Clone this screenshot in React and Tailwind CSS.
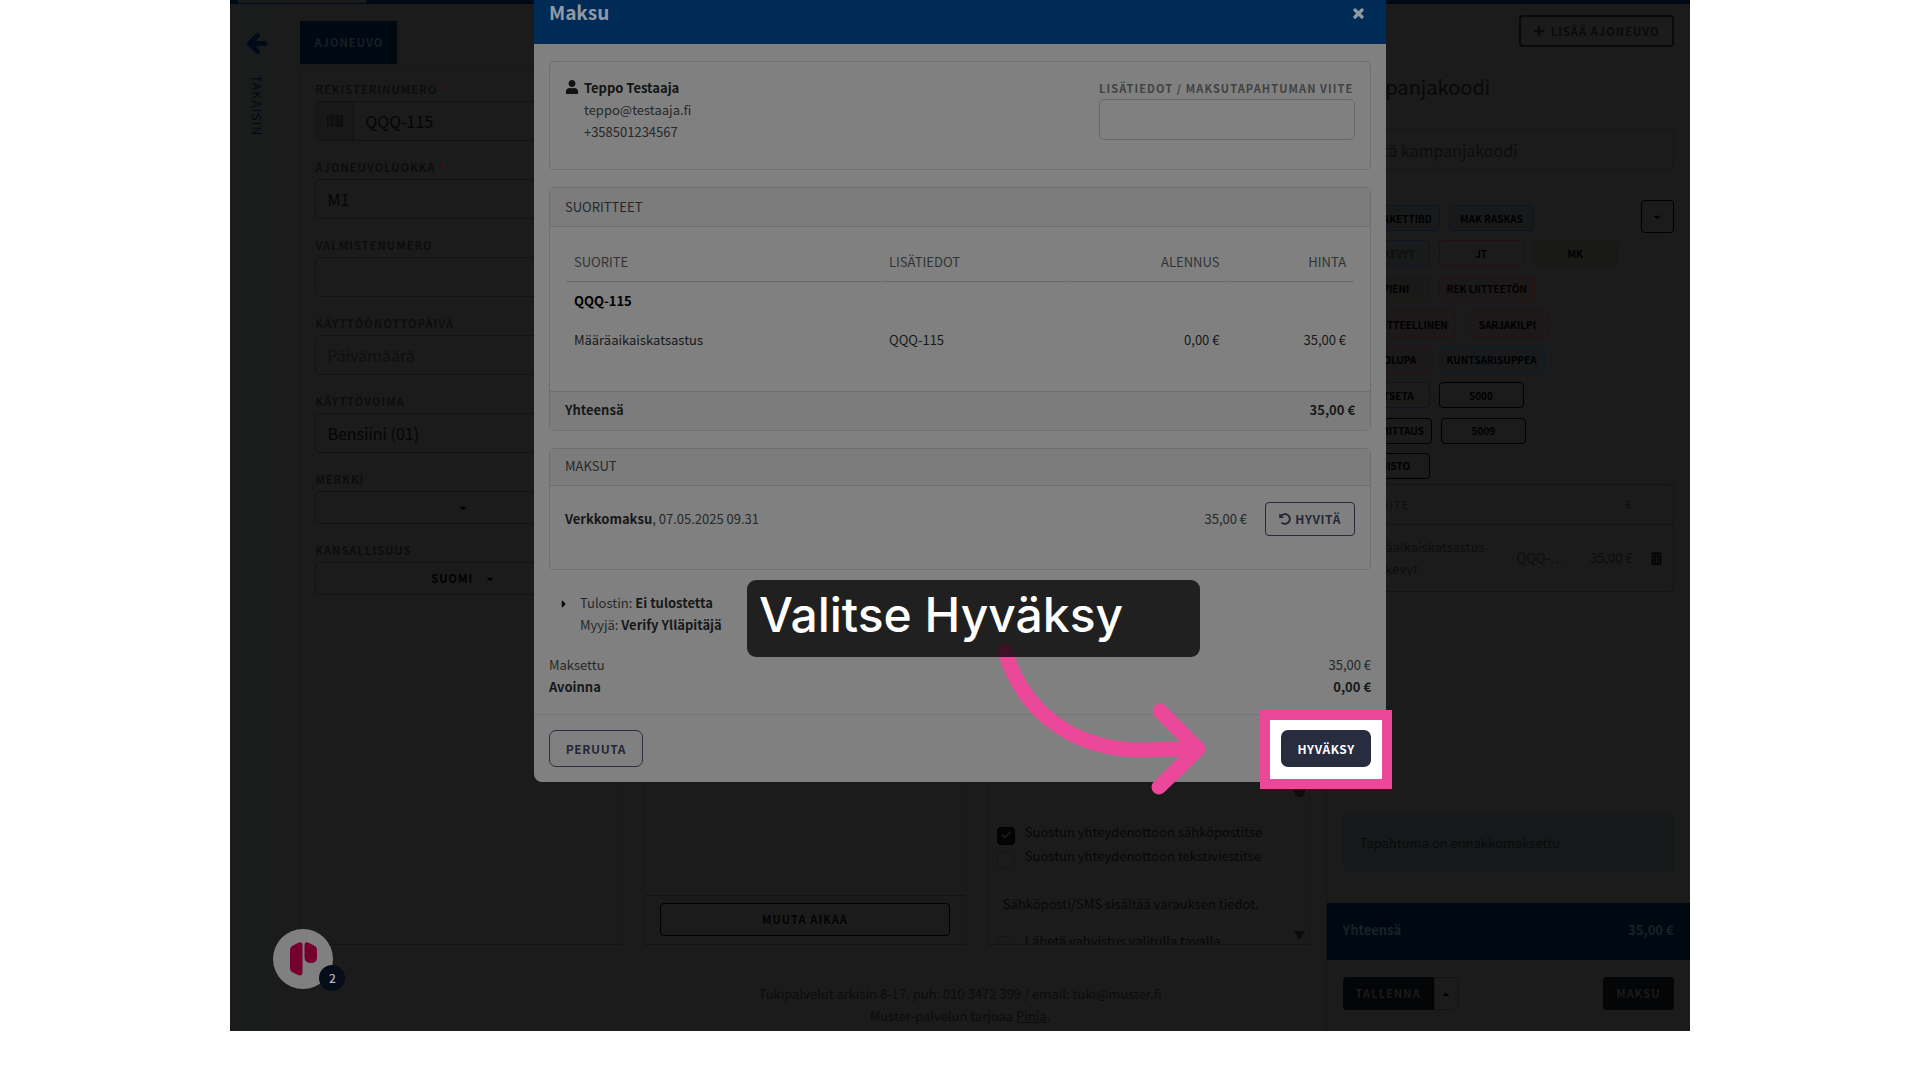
import React from "react";
import { FaPlus, FaUser, FaUndoAlt, FaTrashAlt, FaBarcode, FaCaretDown, FaCaretUp, FaCaretRight, FaCheck } from "react-icons/fa";

const label = "block text-[11px] leading-4 font-bold tracking-widest text-[#0d0d0d]";

function Field({ id, title, required, value, placeholder, icon }) {
  return (
    <div>
      <label htmlFor={id} className={label}>
        {title}
        {required && <span className="text-[#4a0808]"> *</span>}
      </label>
      <div className="mt-1 flex h-10 overflow-hidden rounded-[5px] border border-[#121212]">
        {icon && <span className="flex w-[38px] shrink-0 items-center justify-center border-r border-[#121212] bg-[#181818] text-[#0a0a0a]">{icon}</span>}
        <input id={id} defaultValue={value} placeholder={placeholder} className="w-full min-w-0 bg-transparent px-[11px] text-base text-[#050505] placeholder:text-[#0f0f0f]" />
      </div>
    </div>
  );
}

function PickField({ id, title, value }) {
  return (
    <div>
      <label htmlFor={id} className={label}>{title}</label>
      <button id={id} type="button" className="mt-1 flex h-[33px] w-full items-center justify-center gap-3 rounded-[5px] border border-[#121212] pl-1 text-[11px] font-bold tracking-widest text-black">
        {value && <span>{value}</span>}
        <FaCaretDown className="size-[10px]" />
      </button>
    </div>
  );
}

const tagRows = [
  [["MAK PAKETTIBD", "border-[#06152a] bg-[#18191b] text-black"], ["MAK RASKAS", "border-[#06152a] bg-[#18191b] text-black"]],
  [["MAK KEVYT", "border-[#0f1520] bg-[#191a1a] text-[#0d0e0e]"], ["JT", "border-[#230f14] text-black"], ["MK", "border-[#151b13] bg-[#191a18] text-black"]],
  [["MP PIENI", "border-[#141b12] bg-[#191a18] text-black"], ["REK LIITTEETÖN", "border-[#29100d] bg-[#1b1919] text-black"]],
  [["REK LIITTEELLINEN", "border-[#29100d] bg-[#1b1919] text-black"], ["SARJAKILPI", "border-[#29100d] bg-[#1b1919] text-black"]],
  [["SIIRTOLUPA", "border-[#29100d] bg-[#1b1919] text-black"], ["KUNTSARISUPPEA", "border-[#081e27] bg-[#181a1b] text-black"]],
  [["A-KATSETA", "border-[#14121f] text-black"], ["5000", "border-black text-black"]],
  [["MELUMITTAUS", "border-black text-black"], ["5009", "border-black text-black"]],
  [["REKIISTO", "border-black text-black"]],
];

const consents = [
  ["Suostun yhteydenottoon sähköpostitse", true],
  ["Suostun yhteydenottoon tekstiviestitse", false],
];

function Tick({ id, text, checked }) {
  return (
    <div className="flex h-6 items-start gap-[10px]">
      <span className="relative mt-[2px] size-[18px] shrink-0">
        <input id={id} type="checkbox" defaultChecked={checked} className="peer size-[18px] appearance-none rounded-[4px] border border-[#161616] checked:border-black checked:bg-[#030405]" />
        {checked && <FaCheck className="pointer-events-none absolute left-1 top-1 size-[10px] text-[#1b1b1b]" />}
      </span>
      <label htmlFor={id} className="text-[13px] leading-4 whitespace-nowrap text-[#070707]">{text}</label>
    </div>
  );
}

function Workspace() {
  return (
    <main className="flex min-w-0 flex-1 flex-col pt-[17px] pr-4 pl-4">
      <div>
        <button type="button" className="h-[43px] bg-[#000812] px-[14px] text-[11px] font-bold tracking-widest text-[#191f25]">AJONEUVO</button>
      </div>
      <div className="grid min-h-0 flex-1 grid-cols-3 gap-[22px]">
        <section className="border border-[#181818] border-b-[#131313] px-[14px] pt-4">
          <form className="flex flex-col gap-[18px]">
            <Field id="reg" title="REKISTERINUMERO" required value="QQQ-115" icon={<FaBarcode className="size-4" />} />
            <Field id="cls" title="AJONEUVOLUOKKA" required value="M1" />
            <Field id="vin" title="VALMISTENUMERO" />
            <Field id="date" title="KÄYTTÖÖNOTTOPÄIVÄ" placeholder="Päivämäärä" />
            <Field id="fuel" title="KÄYTTÖVOIMA" value="Bensiini (01)" />
            <PickField id="make" title="MERKKI" />
            <PickField id="nat" title="KANSALLISUUS" value="SUOMI" />
          </form>
        </section>
        <section className="flex flex-col justify-end border border-[#181818] border-b-[#131313]">
          <div className="border-t border-[#131313] px-[15px] pt-[7px] pb-2">
            <button type="button" className="h-[33px] w-full rounded-[4px] border border-black text-[11px] font-bold tracking-widest text-[#020304]">MUUTA AIKAA</button>
          </div>
        </section>
        <section className="flex flex-col overflow-hidden border border-[#181818] border-b-[#131313]">
          <div className="flex min-h-0 flex-1">
            <div className="flex min-w-0 flex-1 flex-col justify-end overflow-hidden pl-2">
              {consents.map(([text, on], i) => (
                <Tick key={text} id={"consent" + i} text={text} checked={on} />
              ))}
              <p className="mt-[22px] mb-[19px] pl-[6px] text-[13px] leading-5 text-[#070707]">Sähköposti/SMS sisältää varauksen tiedot.</p>
              <div className="h-[11px] overflow-hidden">
                <Tick id="confirm" text="Lähetä vahvistus valitulla tavalla" />
              </div>
            </div>
            <div className="flex w-[18px] flex-col items-center justify-end">
              <span className="mb-[134px] w-[11px] flex-1 rounded-full bg-[#0d0d0d]" />
              <svg viewBox="0 0 11 9" className="mb-1 h-[9px] w-[11px]"><path d="M0 0H11L5.500 9Z" fill="#0b0b0b" /></svg>
            </div>
          </div>
        </section>
      </div>
      <footer className="pt-[38px] pb-1 pl-[310px] text-center text-[13px] leading-[22px] whitespace-nowrap text-[#0b0b0b]">
        <p>Tukipalvelut arkisin 8-17. puh: 010 3472 399 / email: tuki@muster.fi</p>
        <p>Muster-palvelun tarjoaa <a href="#pinja" className="underline">Pinja</a>.</p>
      </footer>
    </main>
  );
}

function Basket() {
  return (
    <aside className="flex w-[364px] shrink-0 flex-col border-l border-[#141414]">
      <div className="flex flex-col px-4 pt-[11px]">
        <button type="button" className="flex h-8 items-center gap-[6px] self-end rounded-[4px] border-2 border-[#0a0a0a] px-3 text-[11px] font-bold tracking-widest text-[#0a0a0a]">
          <FaPlus className="size-3" />LISÄÄ AJONEUVO
        </button>
        <h2 className="mt-6 text-xl leading-8 text-[#080808]">Kampanjakoodi</h2>
        <input aria-label="Kampanjakoodi" placeholder="Syötä kampanjakoodi" className="mt-[26px] h-[41px] rounded-[5px] border border-[#151515] bg-transparent px-3 text-base placeholder:text-[#0d0d0d]" />
        <div className="mt-[30px] flex items-start justify-between">
          <div className="mt-[5px] flex h-[274px] flex-col justify-between pl-[2px]">
            {tagRows.map((row, i) => (
              <div key={i} className="flex gap-[9px]">
                {row.map(([text, tone]) => (
                  <button key={text} type="button" className={"h-[26px] min-w-[85px] rounded-[4px] border px-[7px] text-[10px] font-bold whitespace-nowrap " + tone}>{text}</button>
                ))}
              </div>
            ))}
          </div>
          <button type="button" aria-label="Lisää suoritteita" className="flex size-[33px] shrink-0 items-center justify-center rounded-[4px] border border-black text-black"><FaCaretDown className="size-[10px]" /></button>
        </div>
        <table className="mt-[5px] w-full border-separate border-spacing-0 rounded-[3px] border border-[#141414] text-[13px] text-[#0d0d0d]">
          <thead>
            <tr className="h-10 text-[11px] tracking-widest">
              <th className="border-b border-[#141414] px-3 text-left font-normal">SUORITE</th>
              <th className="border-b border-[#141414]" />
              <th className="border-b border-[#141414] pr-2 text-right font-normal">€</th>
              <th className="w-8 border-b border-[#141414]" />
            </tr>
          </thead>
          <tbody>
            <tr className="h-[66px]">
              <td className="px-3 leading-[22px]">Määräaikaiskatsastus<br />MAK kevyt</td>
              <td className="w-[68px]">QQQ-…</td>
              <td className="w-[56px] pr-2 text-right whitespace-nowrap">35,00 €</td>
              <td><button type="button" aria-label="Poista" className="flex w-full justify-center"><FaTrashAlt className="size-[13px] text-[#050505]" /></button></td>
            </tr>
          </tbody>
        </table>
      </div>
      <div className="mt-auto px-4 pb-8">
        <p className="rounded-[4px] border border-[#131819] bg-[#151919] px-4 py-4 text-[13px] leading-[22px] text-[#070b0c]">Tapahtuma on ennakkomaksettu</p>
      </div>
      <div className="flex h-[57px] items-center justify-between bg-[#000812] px-4 pb-1 text-[13px] font-bold text-[#1b2025]">
        <span>Yhteensä</span><span>35,00 €</span>
      </div>
      <div className="flex justify-between px-4 pt-[17px] pb-[21px] text-[11px] font-bold tracking-widest text-[#1b1b1b]">
        <div className="flex">
          <button type="button" className="h-[33px] rounded-l-[4px] bg-[#040506] px-[13px]">TALLENNA</button>
          <button type="button" aria-label="Lisää toimintoja" className="flex w-[25px] items-center justify-center rounded-r-[4px] border border-[#141414] text-black"><FaCaretUp className="size-[10px]" /></button>
        </div>
        <button type="button" className="h-[33px] rounded-[4px] bg-[#040506] px-[13px]">MAKSU</button>
      </div>
    </aside>
  );
}

function PaymentDialog() {
  return (
    <div role="dialog" aria-label="Maksu" className="relative w-[58.4%] rounded-b-lg bg-[#808080] text-[13px] leading-[22px] text-[#252829]">
      <header className="flex h-11 items-start justify-between bg-[#002b57] px-[15px] text-[#909aa5]">
        <h1 className="text-[19px] leading-6 font-bold">Maksu</h1>
        <button type="button" aria-label="Sulje" className="mt-2 mr-[7px]">
          <svg viewBox="0 0 11 11" className="size-[11px]" fill="none" stroke="currentColor" strokeWidth="3.2" strokeLinecap="round"><path d="M2 2L9 9M9 2L2 9" /></svg>
        </button>
      </header>

      <div className="flex flex-col gap-[17px] px-[15px] pt-[17px]">
        <section className="flex h-[109px] justify-between rounded-[5px] border border-[#6f6f6f] px-[15px] pt-[15px]">
          <div className="flex gap-[5px]">
            <FaUser className="mt-[3px] size-[14px] text-[#101213]" />
            <address className="not-italic">
              <strong className="text-[#121415]">Teppo Testaaja</strong><br />teppo@testaaja.fi<br />+358501234567
            </address>
          </div>
          <div className="w-[256px]">
            <label htmlFor="ref" className="block text-[11px] leading-[22px] font-bold tracking-widest whitespace-nowrap text-[#404243]">LISÄTIEDOT / MAKSUTAPAHTUMAN VIITE</label>
            <input id="ref" className="h-[41px] w-full rounded-[5px] border border-[#696969] bg-transparent px-3" />
          </div>
        </section>

        <section className="rounded-[5px] border border-[#6f6f6f]">
          <h2 className="border-b border-[#6f6f6f] bg-[#7c7c7c] px-[15px] pt-2 pb-2">SUORITTEET</h2>
          <div className="px-[15px] pt-4 pb-8">
            <table className="w-full table-fixed border-separate border-spacing-x-px border-spacing-y-0">
              <colgroup><col className="w-[40%]" /><col className="w-[24%]" /><col className="w-[20%]" /><col className="w-[16%]" /></colgroup>
              <thead>
                <tr className="h-[39px] text-[#303334]">
                  <th className="border-b border-[#696969] px-2 text-left font-normal">SUORITE</th>
                  <th className="border-b border-[#696969] px-2 text-left font-normal">LISÄTIEDOT</th>
                  <th className="border-b border-[#696969] px-2 text-right font-normal">ALENNUS</th>
                  <th className="border-b border-[#696969] px-2 text-right font-normal">HINTA</th>
                </tr>
              </thead>
              <tbody>
                <tr className="h-[38px]"><td colSpan={4} className="px-2 font-bold text-black">QQQ-115</td></tr>
                <tr className="h-[39px] text-[#161819]">
                  <td className="px-2">Määräaikaiskatsastus</td>
                  <td className="px-2">QQQ-115</td>
                  <td className="px-2 text-right">0,00 €</td>
                  <td className="px-2 text-right">35,00 €</td>
                </tr>
              </tbody>
            </table>
          </div>
          <div className="flex justify-between border-t border-[#6f6f6f] bg-[#7c7c7c] px-[15px] pt-[7px] pb-[9px] font-bold text-[#161819]">
            <span>Yhteensä</span><span>35,00 €</span>
          </div>
        </section>

        <section className="rounded-[5px] border border-[#6f6f6f]">
          <h2 className="border-b border-[#6f6f6f] bg-[#7c7c7c] px-[15px] pt-[6px] pb-2">MAKSUT</h2>
          <div className="flex items-center justify-between px-[15px] pt-4 pb-[33px]">
            <p><strong className="text-[#161819]">Verkkomaksu</strong>, 07.05.2025 09.31</p>
            <div className="flex items-center gap-[18px]">
              <span>35,00 €</span>
              <button type="button" className="flex h-[34px] w-[90px] items-center justify-center gap-1 rounded-[4px] border border-[#252839] text-xs font-bold tracking-wider text-[#252839]">
                <FaUndoAlt className="size-3" />HYVITÄ
              </button>
            </div>
          </div>
        </section>
      </div>

      <div className="flex gap-[10px] px-6 pt-[22px]">
        <FaCaretRight className="mt-[6px] size-3 text-black" />
        <p>Tulostin: <strong className="text-[#161819]">Ei tulostetta</strong><br />Myyjä: <strong className="text-[#161819]">Verify Ylläpitäjä</strong></p>
      </div>
      <dl className="px-[15px] pt-[18px] pb-4">
        <div className="flex justify-between"><dt>Maksettu</dt><dd>35,00 €</dd></div>
        <div className="flex justify-between font-bold text-[#161819]"><dt>Avoinna</dt><dd>0,00 €</dd></div>
      </dl>

      <footer className="flex justify-between border-t border-[#757575] p-[15px]">
        <button type="button" className="h-[37px] w-[94px] rounded-[7px] border border-[#2d3040] text-xs font-bold tracking-wider text-[#252839]">PERUUTA</button>
        <div className="relative">
          <span className="absolute -inset-x-[21px] -top-5 -bottom-[22px] border-[10px] border-[#ec4899] bg-white" />
          <button type="button" className="relative h-[37px] w-[90px] rounded-[7px] bg-[#282c3f] text-xs font-bold tracking-wider text-white">HYVÄKSY</button>
        </div>
      </footer>

      <svg viewBox="0 0 212 156" fill="none" stroke="#ec4899" strokeWidth="15" strokeLinecap="round" strokeLinejoin="round" className="pointer-events-none absolute top-[640px] left-[461px] h-[156px] w-[212px]">
        <path d="M10 11C30 77 84 111 150 110Q176 109 202 109M165 71L203 109L164 147" />
      </svg>
      <div role="tooltip" className="absolute top-[580px] left-[213px] h-[77px] w-[453px] rounded-[9px] bg-black/75 pl-3 font-['Inter','Lato',sans-serif] text-5xl leading-[70px] font-medium whitespace-nowrap text-white">Valitse Hyväksy</div>
    </div>
  );
}

export default function App() {
  return (
    <div className="min-h-screen bg-white font-['Noto_Sans_CJK_SC',sans-serif]">
      <div className="relative mx-auto flex h-[calc(100vh-49px)] w-[76%] flex-col overflow-hidden bg-[#1b1b1b]">
        <div className="h-1 bg-[#000a17] pl-2"><div className="h-[3px] w-32 bg-[#1b1b1b]" /></div>
        <div className="flex min-h-0 flex-1">
          <nav className="flex w-[54px] shrink-0 flex-col items-center bg-[#1a1b1b] pt-7 text-[#000a18]">
            <a href="#takaisin" className="flex flex-col items-center gap-5">
              <svg viewBox="0 0 22 23" className="h-[23px] w-[22px]" fill="none" stroke="currentColor" strokeWidth="5" strokeLinecap="round" strokeLinejoin="round"><path d="M19 11.500H4M11.500 3.500L3.500 11.500L11.500 19.500" /></svg>
              <span className="text-xs leading-4 tracking-widest [writing-mode:vertical-rl]">TAKAISIN</span>
            </a>
          </nav>
          <Workspace />
          <Basket />
        </div>

        <div className="pointer-events-none absolute inset-0 flex items-start justify-center">
          <PaymentDialog />
        </div>

        <button type="button" aria-label="Tuki, 2 ilmoitusta" className="absolute bottom-[42px] left-[43px] size-[60px] rounded-full bg-[#808080]">
          <svg viewBox="0 0 60 60" className="size-[60px]">
            <path d="M17 21Q17 18 20 16.500L25 14Q29.500 12 29.500 16V43Q29.500 47.500 25 46L20 43.500Q17 42 17 39Z" fill="#750030" />
            <path d="M31.500 16Q31.500 12 36 14L41 16.500Q44 18 44 21V28Q44 34 38 34Q31.500 34 31.500 28Z" fill="#750030" />
          </svg>
          <span className="absolute -right-3 -bottom-[2px] flex size-[26px] items-center justify-center rounded-full bg-[#060d19] text-xs font-medium text-[#b0b4b8]">2</span>
        </button>
      </div>
    </div>
  );
}
